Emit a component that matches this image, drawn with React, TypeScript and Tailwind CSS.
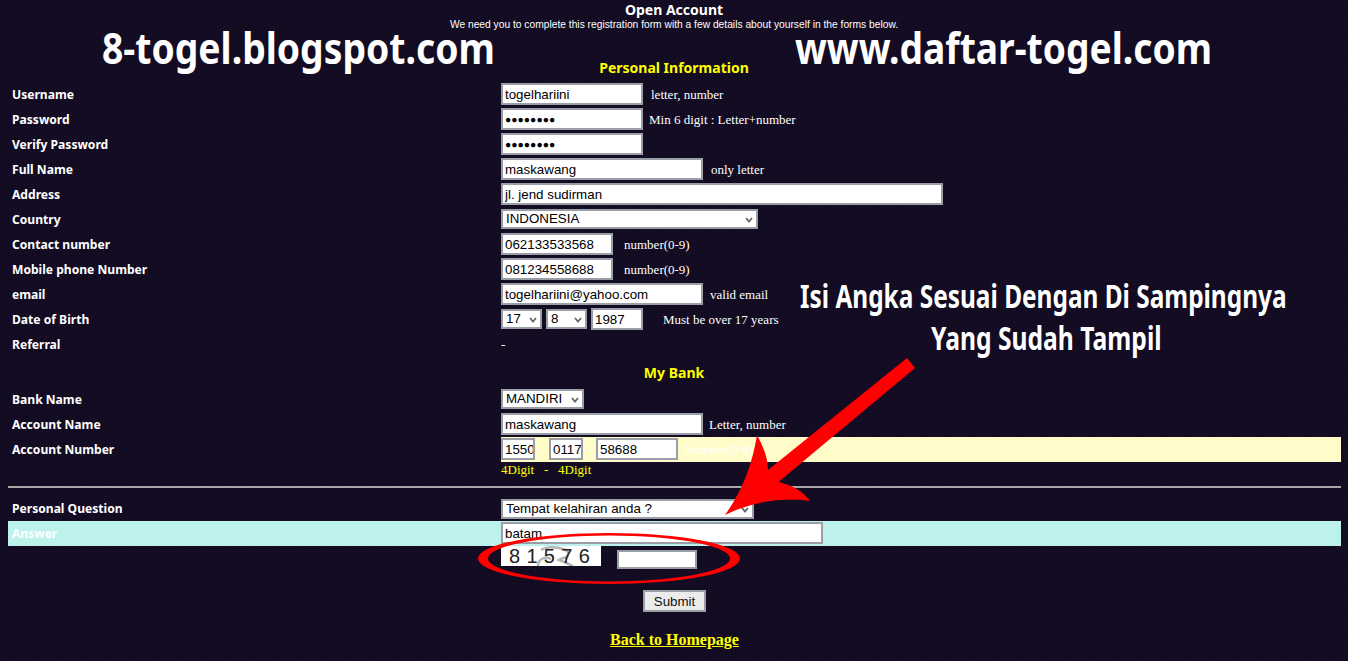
const label = "w-[493px] shrink-0 pl-1 pt-[2px] text-[12.1px] font-bold text-white font-['Noto_Sans','DejaVu_Sans',sans-serif]";
const hint = "text-[13px] text-white font-['Liberation_Serif',serif] whitespace-nowrap";
const field = "mb-[1px] h-[22px] border-2 border-[#9a9ea6] bg-white pl-[2px] pr-0 text-[13.33px] text-black font-['Liberation_Sans',sans-serif] outline-none";

function Chevron() {
  return (
    <svg className="absolute right-[3px] top-[6px]" width="8" height="6" viewBox="0 0 8 6">
      <path d="M1 1 L4 4.5 L7 1" fill="none" stroke="#666" strokeWidth="1.8" />
    </svg>
  );
}

function Select({ value, width }: { value: string; width: string }) {
  return (
    <div className={`relative mb-[1px] h-[20px] ${width} shrink-0 border-2 border-[#9a9ea6] bg-white pl-[3px] text-[13.33px] leading-[16px] text-black font-['Liberation_Sans',sans-serif]`}>
      {value}
      <Chevron />
    </div>
  );
}

function Input({ value, width }: { value: string; width: string }) {
  return <input readOnly value={value} className={`${field} ${width} shrink-0`} />;
}

function Secret() {
  return <input readOnly value="●●●●●●●●" className={`${field} w-[142px] shrink-0 !text-[10.4px] font-['DejaVu_Sans',sans-serif]`} />;
}

function Row({ name, children, h = "h-[25px]", className = "", labelClass = "" }: { name: string; children?: React.ReactNode; h?: string; className?: string; labelClass?: string }) {
  return (
    <div className={`flex ${h} items-center ${className}`}>
      <div className={`${label} ${labelClass}`}>{name}</div>
      <div className="flex h-full min-w-0 flex-1 items-center">{children}</div>
    </div>
  );
}

function Heading({ children, className }: { children: React.ReactNode; className: string }) {
  return <div className={`text-center text-[14px] font-bold font-['Noto_Sans','DejaVu_Sans',sans-serif] ${className}`}>{children}</div>;
}

const overlay = "pointer-events-none absolute origin-left whitespace-nowrap font-bold text-white font-['Noto_Sans',sans-serif]";

export default function App() {
  return (
    <div className="relative h-[661px] w-[1348px] overflow-hidden bg-[#120b22] bg-[radial-gradient(#17122a_1px,transparent_1px)] bg-[length:3px_3px]">
      <Heading className="h-[19px] leading-[19px] text-white">Open Account</Heading>
      <div className="h-[12px] text-center text-[10.25px] leading-[12px] text-white font-['Liberation_Sans',sans-serif]">
        We need you to complete this registration form with a few details about yourself in the forms below.
      </div>
      <Heading className="mt-[27px] h-[24px] leading-[20px] text-[#ffff00]">Personal Information</Heading>
      <div className="pl-[8px] pr-[7px]">
        <Row name="Username"><Input value="togelhariini" width="w-[142px]" /><span className={`${hint} ml-[8px]`}>letter, number</span></Row>
        <Row name="Password"><Secret /><span className={`${hint} ml-[6px]`}>Min 6 digit : Letter+number</span></Row>
        <Row name="Verify Password"><Secret /></Row>
        <Row name="Full Name"><Input value="maskawang" width="w-[202px]" /><span className={`${hint} ml-[8px]`}>only letter</span></Row>
        <Row name="Address"><Input value="jl. jend sudirman" width="w-[442px]" /></Row>
        <Row name="Country"><Select value="INDONESIA" width="w-[257px]" /></Row>
        <Row name="Contact number"><Input value="062133533568" width="w-[112px]" /><span className={`${hint} ml-[11px]`}>number(0-9)</span></Row>
        <Row name="Mobile phone Number"><Input value="081234558688" width="w-[112px]" /><span className={`${hint} ml-[11px]`}>number(0-9)</span></Row>
        <Row name="email"><Input value="togelhariini@yahoo.com" width="w-[202px]" /><span className={`${hint} ml-[7px]`}>valid email</span></Row>
        <Row name="Date of Birth">
          <div className="flex items-center gap-[4px]">
            <Select value="17" width="w-[41px]" />
            <Select value="8" width="w-[41px]" />
            <Input value="1987" width="w-[52px]" />
          </div>
          <span className={`${hint} ml-[20px]`}>Must be over 17 years</span>
        </Row>
        <Row name="Referral"><span className={hint}>-</span></Row>
      </div>
      <Heading className="mt-[5px] h-[25px] leading-[22px] text-[#ffff00]">My Bank</Heading>
      <div className="pl-[8px] pr-[7px]">
        <Row name="Bank Name"><Select value="MANDIRI" width="w-[83px]" /></Row>
        <Row name="Account Name"><Input value="maskawang" width="w-[202px]" /><span className={`${hint} ml-[6px]`}>Letter, number</span></Row>
        <Row name="Account Number">
          <div className="flex h-full flex-1 items-center bg-[#fffcc9]">
            <Input value="1550" width="w-[34px]" />
            <span className={`${hint} w-[14px] text-center`}>-</span>
            <Input value="0117" width="w-[34px]" />
            <span className={`${hint} w-[13px] text-center`}>-</span>
            <Input value="58688" width="w-[82px]" />
            <span className={`${hint} ml-[6px]`}>Number(0-9)</span>
          </div>
        </Row>
        <div className="flex h-[24px] items-start">
          <div className="w-[493px] shrink-0" />
          <span className="text-[13px] leading-[16px] text-[#ffff00] font-['Liberation_Serif',serif] whitespace-pre">4Digit   -   4Digit</span>
        </div>
        <div className="h-[2px] bg-[#a5a5a5]" />
        <Row name="Personal Question" h="h-[33px]" className="pt-[9px]" labelClass="!pt-0"><Select value="Tempat kelahiran anda ?" width="w-[253px]" /></Row>
        <Row name="Answer" className="bg-[#bdf2ec]"><Input value="batam" width="w-[322px]" /></Row>
        <div className="flex h-[44px] items-start">
          <div className="w-[493px] shrink-0" />
          <div className="relative h-[20px] w-[100px] shrink-0 overflow-hidden bg-white pl-[8px] text-left text-[20px] leading-[21px] tracking-[6.3px] text-[#222] font-['Liberation_Sans',sans-serif]">
            <svg className="absolute left-0 top-0" width="100" height="20" viewBox="0 0 100 20">
              <path d="M37 20 C37 13 44 10 50 13 M40 4 C46 0 56 1 62 3 C70 5 68 12 62 12 L58 14 L72 20" fill="none" stroke="#b5b5b5" strokeWidth="2.5" />
            </svg>
            <span className="relative">81576</span>
          </div>
          <input readOnly className={`${field} mt-[4px] ml-[16px] !h-[19px] w-[80px]`} />
        </div>
        <div className="flex justify-center">
          <button className="h-[22px] w-[63px] border-2 border-[#9a9ea6] bg-[#ececec] text-[13.33px] text-[#111] font-['Liberation_Sans',sans-serif]">Submit</button>
        </div>
        <div className="mt-[16px] text-center text-[16px] font-bold text-[#ffff00] underline font-['Liberation_Serif',serif]">Back to Homepage</div>
      </div>

      <div className={`${overlay} left-[102px] top-[20px] scale-x-[0.867] text-[43px] leading-[56px]`}>8-togel.blogspot.com</div>
      <div className={`${overlay} left-[795px] top-[20px] scale-x-[0.865] text-[43px] leading-[56px]`}>www.daftar-togel.com</div>
      <div className={`${overlay} left-[800px] top-[276px] scale-x-[0.763] text-[32px] leading-[40px]`}>Isi Angka Sesuai Dengan Di Sampingnya</div>
      <div className={`${overlay} left-[931px] top-[318px] scale-x-[0.77] text-[32px] leading-[40px]`}>Yang Sudah Tampil</div>

      <svg className="pointer-events-none absolute left-0 top-0" width="1348" height="661" viewBox="0 0 1348 661">
        <path d="M907 358 L915 368 L778.5 482 Q800 487 810 501 Q765 495 725 515 Q750 480 757 435 Q768 455 768 470 Z" fill="#ff0000" />
        <path fillRule="evenodd" d="M478 558.5 A131 25.5 0 1 1 740 558.5 A131 25.5 0 1 1 478 558.5 Z M488 558.5 A121 23 0 1 0 730 558.5 A121 23 0 1 0 488 558.5 Z" fill="#ff0000" />
      </svg>
    </div>
  );
}
